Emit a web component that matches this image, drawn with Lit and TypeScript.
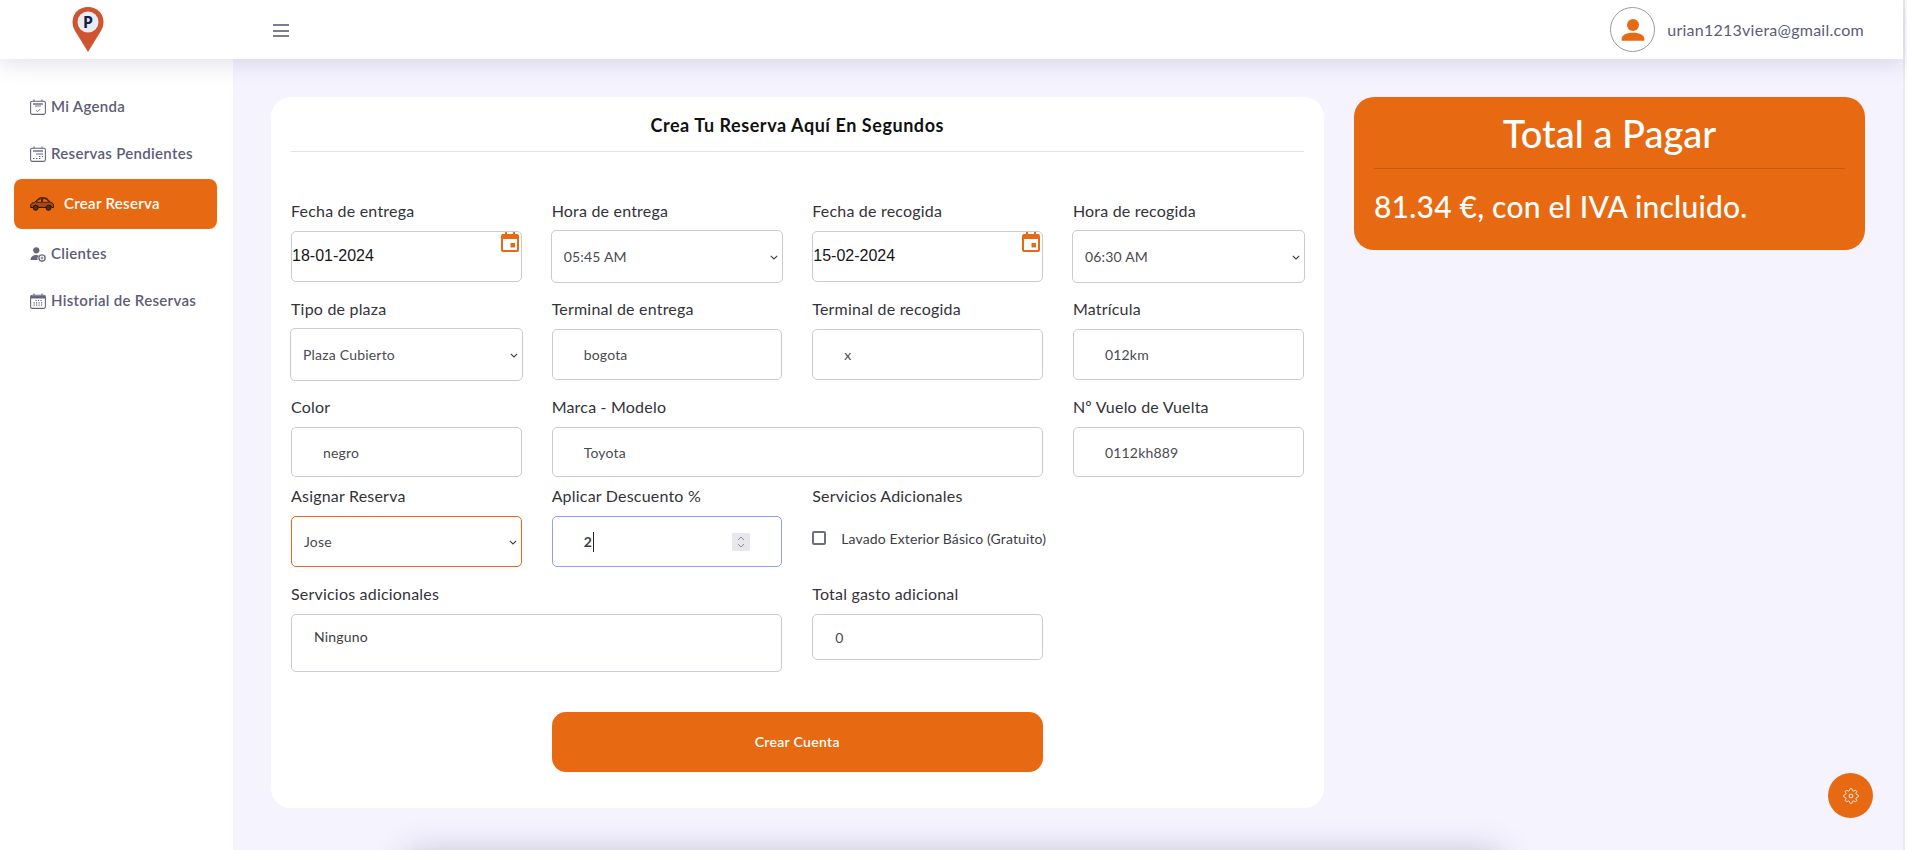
import { LitElement, html, css, svg } from "lit";
import { customElement } from "lit/decorators.js";

const chevron = html`<svg class="chev" viewBox="0 0 8 5" width="8" height="5"><path d="M.8.8 4 4 7.2.8" fill="none" stroke="#3d3d46" stroke-width="1.1"/></svg>`;
const cal = html`<svg class="cal" viewBox="0 0 18 20" width="18" height="20"><path fill="#e76a12" d="M4 0h2v2h6V0h2v2h2a2 2 0 0 1 2 2v14a2 2 0 0 1-2 2H2a2 2 0 0 1-2-2V4a2 2 0 0 1 2-2h2Z"/><rect x="2" y="7" width="14" height="11" fill="#fff"/><rect x="9.5" y="11" width="4.5" height="4.5" fill="#e76a12"/></svg>`;

const calBase = svg`<rect x=".6" y="2.2" width="14.8" height="13.2" rx="1.6" fill="none" stroke="currentColor" stroke-width="1.1"/><path d="M4 .6v2M12 .6v2" stroke="currentColor" stroke-width="1.1"/>`;
const icons = {
  agenda: html`<svg class="ico" viewBox="0 0 16 16" width="16" height="16">${calBase}<path d="M3 5h10" stroke="currentColor" stroke-width="1.4"/><path d="M5 7h6" stroke="currentColor" stroke-width=".9"/><path d="m6 11.3 1.5 1.4 2.7-2.7" fill="none" stroke="currentColor" stroke-width=".9"/></svg>`,
  pending: html`<svg class="ico" viewBox="0 0 16 16" width="16" height="16">${calBase}<path d="M3 5h10" stroke="currentColor" stroke-width="1.4"/><path d="M6 8h7M9 10.5h1.4M12 10.5h1M3 12.5h1.4M6 12.5h1.4M9 12.5h1.4" stroke="currentColor" stroke-width="1.2"/></svg>`,
  car: html`<svg class="ico car" viewBox="0 0 24 14" width="24" height="14"><path d="M.7 8.5C.7 6.8 2.4 5.8 4.6 5.4L8 2.2C9 1.200 10.500.8 12 .8h2.500c1.400 0 2.500.6 3.500 1.700l2.400 2.800c1.900.4 3.100 1.400 3.100 3v2.200h-1.700a2.700 2.700 0 0 0-5.300 0H8.300a2.700 2.700 0 0 0-5.300 0H.7Z" fill="#a54a10" stroke="#2b1606" stroke-width="1"/><path d="M6 5.300 8.800 2.700c.8-.7 1.700-1 2.700-1v3.600Zm6.600 0V1.700h2c1 0 1.800.4 2.500 1.200l2 2.400Z" fill="#e76a12" stroke="#2b1606" stroke-width=".8"/><circle cx="5.700" cy="10.800" r="2.500" fill="#5a2a0a" stroke="#2b1606"/><circle cx="18.500" cy="10.800" r="2.500" fill="#5a2a0a" stroke="#2b1606"/></svg>`,
  client: html`<svg class="ico" viewBox="0 0 16 16" width="16" height="16"><circle cx="6.300" cy="4.300" r="3.100" fill="currentColor"/><path d="M.6 14c0-3.300 2.500-5 5.700-5 1 0 1.800.2 2.500.5A4.600 4.600 0 0 0 7.700 14Z" fill="currentColor"/><circle cx="12" cy="12" r="3.100" fill="none" stroke="currentColor" stroke-width="1.300"/><path d="M10.600 12h2.800M12 10.600v2.800" stroke="currentColor" stroke-width=".9"/></svg>`,
  history: html`<svg class="ico" viewBox="0 0 16 16" width="16" height="16">${calBase}<path d="M1 3h14v2.500H1Z" fill="currentColor"/><path d="M5.500 7.500h1.200M8 7.500h1.200M10.500 7.500h1.200M3.500 9.800h1.200M6 9.800h1.200M8.500 9.800h1.200M11 9.800h1.200M3.500 12.200h1.200M6 12.200h1.200M8.500 12.200h1.200M11 12.200h1.200" stroke="currentColor" stroke-width="1.200"/></svg>`,
};

/* Eight-toothed gear outline for the floating settings button. */
const gearPoints = Array.from({ length: 32 }, (_, i) => {
  const a = ((i - 0.5) * Math.PI) / 16 - Math.PI / 2;
  const r = i % 4 < 2 ? 7.4 : 5.6;
  return `${(8 + r * Math.cos(a)).toFixed(2)},${(8 + r * Math.sin(a)).toFixed(2)}`;
}).join(" ");

@customElement("app-root")
export class AppRoot extends LitElement {
  static styles = css`
    :host { display: flex; height: 850px; overflow: hidden; background: #fff; font-family: Lato, "Noto Sans", sans-serif; color: #33333a; }
    * { box-sizing: border-box; }
    .page { flex: 1; min-width: 0; display: flex; flex-direction: column; background: #f5f3fe; }
    .strip { width: 4px; background: #fdfdfd; border-left: 2px solid #ebebeb; }

    .top { position: relative; z-index: 2; height: 59px; flex: none; background: #fff; display: flex; align-items: center; padding: 0 39px 0 72px; box-shadow: 0 5px 22px rgba(70, 70, 130, .16); }
    .logo { position: relative; width: 32px; height: 45px; flex: none; }
    .logo svg { display: block; }
    .logo span { position: absolute; left: 0; right: 0; top: 5px; text-align: center; font: 700 16px/20px "Noto Sans", sans-serif; color: #14204a; }
    .burger { margin: 2px 0 0 169px; display: flex; flex-direction: column; gap: 3.500px; width: 16px; }
    .burger i { display: block; height: 2px; background: #7c7c92; }
    .grow { flex: 1; }
    .avatar { width: 45px; height: 45px; border: 1px solid #9c9c9c; border-radius: 50%; display: flex; align-items: center; justify-content: center; margin-right: 12px; }
    .email { font-size: 16px; letter-spacing: .25px; color: #5c5c78; }

    .body { flex: 1; min-height: 0; display: flex; }
    .side { width: 233px; flex: none; background: #fff; padding: 26px 16px 0 14px; display: flex; flex-direction: column; gap: 3px; }
    .item { height: 44px; display: flex; align-items: center; gap: 5px; padding-left: 16px; border-radius: 8px; font-size: 15px; font-weight: 600; letter-spacing: .3px; color: #5c5c78; }
    .item span { padding-bottom: 2px; }
    .item.on { height: 50px; background: #e76a12; color: #fff; gap: 10px; }
    .ico { flex: none; color: #66667f; }

    .main { flex: 1; min-width: 0; padding: 38px 38px 0 38px; }
    .cols { display: flex; gap: 30px; align-items: flex-start; }
    .card { width: 1053px; flex: none; background: #fff; border-radius: 20px; padding: 16px 20.500px 36px 20px; }
    h1 { margin: 0 0 48px; font-size: 18px; line-height: 25px; font-weight: 700; letter-spacing: .56px; text-align: center; color: #111; padding-bottom: 13px; border-bottom: 1px solid #e2e3e8; }
    form { display: grid; grid-template-columns: repeat(4, 1fr); column-gap: 30px; grid-template-rows: 98px 98px 89px 98px auto; align-items: start; }
    label.l { display: block; font-size: 16px; line-height: 22px; letter-spacing: .2px; color: #33333a; margin-bottom: 9px; }
    .f { position: relative; min-width: 0; }
    .s2 { grid-column: span 2; }
    input.t, textarea, select { display: block; width: 100%; height: 51px; border: 1px solid #c8cbd3; border-radius: 5px; background: #fff; font: 14px Lato, sans-serif; letter-spacing: .2px; color: #4a4a52; outline: none; margin: 0; }
    input.t { padding: 0 10px 0 31px; }
    input.h50 { height: 50px; }
    input.h46 { height: 46px; padding-left: 22px; }
    input.date { padding: 0 0 1px; font: 16px "Liberation Sans", sans-serif; letter-spacing: 0; color: #16161a; }
    textarea { height: 58px; resize: none; padding: 12px 22px; line-height: 20px; color: #3d3d46; }
    .selw { position: relative; }
    select { appearance: none; padding: 0 24px 0 12px; }
    .out select { height: 53px; width: calc(100% + 2px); margin: -1px -1px 0; }
    .chev { position: absolute; right: 5px; top: 50%; margin-top: -2px; pointer-events: none; }
    .out .chev { right: 4px; }
    select.focus { border-color: #e76a12; }
    .cal { position: absolute; right: 3px; top: 1px; }
    input.blue { border-color: #8fa0f7; color: #3d3d46; font-weight: 700; }
    .cursor { position: absolute; left: 41px; bottom: 15px; width: 1px; height: 20px; background: #22222a; }
    .spin { position: absolute; right: 32px; bottom: 16px; width: 18px; height: 18px; background: #e7e7ed; display: flex; align-items: center; justify-content: center; }
    .check { display: flex; align-items: center; gap: 15px; height: 20px; margin-top: 21px; font-size: 14px; letter-spacing: .12px; color: #3d3d46; white-space: nowrap; }
    .check input { appearance: none; flex: none; margin: 0; width: 14px; height: 14px; border: 2px solid #6d6d86; border-radius: 2px; background: #fff; }
    .btn { grid-column: 2 / span 2; margin-top: 40px; height: 60px; padding: 0 0 2px; border: 0; border-radius: 14px; background: #e76a12; color: #fff; font: 600 14px Lato, sans-serif; letter-spacing: .3px; }

    .total { flex: 1; min-width: 0; height: 153px; background: #e76a12; border-radius: 20px; color: #fff; padding: 14px 20px 0; }
    .total h2 { margin: 0; font-size: 38px; line-height: 45px; font-weight: 500; text-align: center; padding-bottom: 12px; border-bottom: 1px solid #c9590e; }
    .total p { margin: 14px 0 0; font-size: 30px; line-height: 47px; font-weight: 500; letter-spacing: .22px; }

    .below { height: 40px; margin: 48px 0 0 138px; width: 1090px; flex: none; background: #fff; box-shadow: 0 0 36px rgba(40, 40, 90, .3); }
    .fab { position: absolute; left: 1828px; top: 773px; width: 45px; height: 45px; padding: 0; border: 0; border-radius: 50%; background: #e76a12; display: flex; align-items: center; justify-content: center; }
  `;

  field(label: string, value: string, cls = "") {
    return html`<div class="f ${cls.includes("s2") ? "s2" : ""}"><label class="l">${label}</label><input class="t ${cls}" .value=${value}></div>`;
  }
  sel(label: string, value: string, outset = true, focus = false) {
    return html`<div class="f"><label class="l">${label}</label><div class="selw ${outset ? "out" : ""}"><select class=${focus ? "focus" : ""}><option>${value}</option></select>${chevron}</div></div>`;
  }
  date(label: string, value: string) {
    return html`<div class="f"><label class="l">${label}</label><div class="selw"><input class="t date" .value=${value}>${cal}</div></div>`;
  }

  render() {
    return html`
      <div class="page">
        <header class="top">
          <div class="logo">
            <svg viewBox="0 0 32 45" width="32" height="45"><path d="M16 0C7 0 .5 6.500.5 15c0 3 .8 6 2.300 8.600L16 45l13.200-21.400c1.500-2.600 2.300-5.600 2.300-8.600C31.500 6.500 25 0 16 0Z" fill="#cf5430"/><circle cx="16" cy="15" r="10.500" fill="#e9edf3"/></svg>
            <span>P</span>
          </div>
          <div class="burger"><i></i><i></i><i></i></div>
          <div class="grow"></div>
          <div class="avatar"><svg viewBox="0 0 24 24" width="24" height="24"><circle cx="12" cy="7" r="6" fill="#e76a12"/><path d="M.6 21.500C.6 17 5 14.700 12 14.700S23.400 17 23.400 21.500c0 .9-.4 1.300-1.200 1.300H1.800c-.8 0-1.200-.4-1.200-1.300Z" fill="#e76a12"/></svg></div>
          <span class="email">urian1213viera@gmail.com</span>
        </header>
        <div class="body">
          <nav class="side">
            <div class="item">${icons.agenda}<span>Mi Agenda</span></div>
            <div class="item">${icons.pending}<span>Reservas Pendientes</span></div>
            <div class="item on">${icons.car}<span>Crear Reserva</span></div>
            <div class="item">${icons.client}<span>Clientes</span></div>
            <div class="item">${icons.history}<span>Historial de Reservas</span></div>
          </nav>
          <main class="main">
            <div class="cols">
              <section class="card">
                <h1>Crea Tu Reserva Aquí En Segundos</h1>
                <form>
                  ${this.date("Fecha de entrega", "18-01-2024")}
                  ${this.sel("Hora de entrega", "05:45 AM")}
                  ${this.date("Fecha de recogida", "15-02-2024")}
                  ${this.sel("Hora de recogida", "06:30 AM")}

                  ${this.sel("Tipo de plaza", "Plaza Cubierto")}
                  ${this.field("Terminal de entrega", "bogota")}
                  ${this.field("Terminal de recogida", "x")}
                  ${this.field("Matrícula", "012km")}

                  ${this.field("Color", "negro", "h50")}
                  ${this.field("Marca - Modelo", "Toyota", "h50 s2")}
                  ${this.field("Nº Vuelo de Vuelta", "0112kh889", "h50")}

                  ${this.sel("Asignar Reserva", "Jose", false, true)}
                  <div class="f"><label class="l">Aplicar Descuento %</label>
                    <input class="t blue" .value=${"2"}>
                    <span class="cursor"></span>
                    <span class="spin"><svg viewBox="0 0 10 14" width="10" height="14"><path d="M2 5 5 2l3 3M2 9l3 3 3-3" fill="none" stroke="#8a8a98" stroke-width="1"/></svg></span>
                  </div>
                  <div class="f"><label class="l">Servicios Adicionales</label>
                    <label class="check"><input type="checkbox">Lavado Exterior Básico (Gratuito)</label>
                  </div>
                  <div></div>

                  <div class="f s2"><label class="l">Servicios adicionales</label><textarea .value=${"Ninguno"}></textarea></div>
                  ${this.field("Total gasto adicional", "0", "h46")}
                  <div></div>

                  <button class="btn" type="button">Crear Cuenta</button>
                </form>
              </section>
              <aside class="total">
                <h2>Total a Pagar</h2>
                <p>81.34 €, con el IVA incluido.</p>
              </aside>
            </div>
            <div class="below"></div>
          </main>
        </div>
      </div>
      <div class="strip"></div>
      <button class="fab" type="button"><svg viewBox="0 0 16 16" width="16" height="16"><polygon points=${gearPoints} fill="none" stroke="#fde9d9" stroke-width="1"/><rect x="6.300" y="6.300" width="3.400" height="3.400" rx=".6" fill="none" stroke="#fde9d9" stroke-width="1"/></svg></button>
    `;
  }
}
